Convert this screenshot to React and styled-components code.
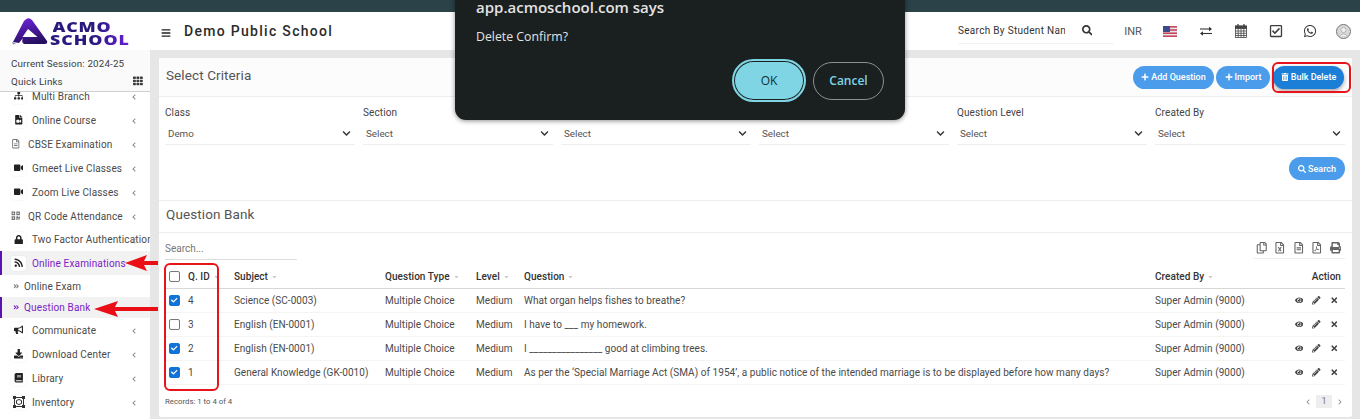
import React from 'react'
import styled, { createGlobalStyle } from 'styled-components'
import {
  FaBars, FaBook, FaBullhorn, FaCheck, FaChevronDown, FaChevronLeft, FaChevronRight, FaDownload,
  FaEye, FaFileVideo, FaLock, FaPencilAlt, FaPlus, FaPrint, FaQrcode,
  FaRegCheckSquare, FaRegCopy, FaRegFileAlt, FaRegFileExcel, FaRegFilePdf, FaRss, FaSearch, FaSitemap,
  FaTh, FaTimes, FaTrashAlt, FaVideo, FaWhatsapp, FaAngleDoubleRight, FaSortDown,
} from 'react-icons/fa'

const GlobalStyle = createGlobalStyle`
  html, body { margin: 0; padding: 0; height: 100%; overflow: hidden; }
  body { font-family: Roboto, "Liberation Sans", sans-serif; font-size: 10px; color: #444; background: #e6e6e6; }
`

const Page = styled.div`
  position: relative;
  width: 1360px;
  height: 419px;
  overflow: hidden;
  display: flex;
  flex-direction: column;
  background: #e6e6e6;
`

const TopStrip = styled.div`
  height: 12px;
  flex: none;
  background: #2a4248;
`

const Header = styled.header`
  height: 38px;
  flex: none;
  display: flex;
  align-items: center;
  background: #fff;
`

const LogoBox = styled.div`
  width: 150px;
  height: 38px;
  flex: none;
  display: flex;
  align-items: flex-start;
  padding: 5px 0 0 12px;
  box-sizing: border-box;
`

const LogoText = styled.div`
  margin: 4px 0 0 2px;
  font-family: "Open Sans", sans-serif;
  font-weight: 800;
  font-size: 14px;
  line-height: 12.5px;
  transform: scaleX(1.27);
  transform-origin: left top;
`

const LogoLine = styled.div`
  letter-spacing: ${p => p.$spacing}px;
  margin-left: ${p => p.$indent}px;
  background: linear-gradient(90deg, #2a1a80, #2a1a80 55%, #6a1fd8);
  -webkit-background-clip: text;
  background-clip: text;
  color: transparent;
`

const Burger = styled.span`
  width: 34px;
  padding-left: 11px;
  margin-top: 3px;
  box-sizing: border-box;
  flex: none;
  display: flex;
  color: #222;
  font-size: 10px;
`

const SchoolName = styled.h1`
  margin: 0;
  font-size: 14px;
  font-weight: 500;
  letter-spacing: 1.3px;
  color: #2b2b2b;
`

const HeaderTools = styled.div`
  margin-left: auto;
  display: flex;
  align-items: center;
`

const StudentSearch = styled.div`
  width: 156px;
  height: 26px;
  display: flex;
  align-items: center;
  justify-content: space-between;
  padding-right: 22px;
  box-sizing: border-box;
  border-bottom: 1px solid #f3f3f3;
  color: #333;
  font-size: 10px;
  letter-spacing: 0.3px;
  svg { font-size: 10.5px; }
`

const ClippedText = styled.span`
  width: 107px;
  overflow: hidden;
  white-space: nowrap;
`

const ToolCell = styled.div`
  width: ${p => p.$width || 35}px;
  display: flex;
  justify-content: center;
  align-items: center;
  color: #3c3c3c;
  font-size: ${p => p.$size || 13}px;
`

const Currency = styled.span`
  font-size: 11px;
  color: #555;
`

const Body = styled.div`
  flex: 1;
  min-height: 0;
  display: flex;
`

const Sidebar = styled.aside`
  width: 150px;
  flex: none;
  display: flex;
  flex-direction: column;
  background: #fff;
  overflow: hidden;
`

const SessionBox = styled.div`
  position: relative;
  z-index: 1;
  height: 42px;
  flex: none;
  box-sizing: border-box;
  padding: 4px 7px 0 11px;
  background: #fafafa;
  border-bottom: 1px solid #cfcfcf;
  font-size: 9.8px;
  letter-spacing: 0.15px;
`

const SessionLine = styled.div`
  height: 18px;
  line-height: 13px;
  display: flex;
  justify-content: space-between;
  align-items: center;
  color: #3d3d3d;
`

const Menu = styled.nav`
  margin-top: -8px;
  display: flex;
  flex-direction: column;
`

const MenuRow = styled.div`
  position: relative;
  height: ${p => p.$height || 24}px;
  flex: none;
  display: flex;
  align-items: center;
  box-sizing: border-box;
  white-space: nowrap;
  font-size: 10px;
  letter-spacing: 0.15px;
  color: ${p => (p.$active ? '#7a22c4' : '#4a4a4a')};
  background: ${p => (p.$active ? '#f2f2f2' : '#fff')};
  border-left: ${p => (p.$active ? '2px solid #5b12b0' : '0')};
  padding-left: ${p => (p.$active ? 9 : 11)}px;
`

const MenuIcon = styled.span`
  width: 15px;
  height: 15px;
  margin-right: 6px;
  flex: none;
  display: flex;
  align-items: center;
  justify-content: center;
  border-radius: 3px;
  background: #fff;
  box-shadow: 0 0 2px rgba(0, 0, 0, 0.08);
  color: #222;
  font-size: 9.5px;
`

const FlatIcon = styled.span`
  width: 17px;
  flex: none;
  display: flex;
  color: #777;
  font-size: 9.5px;
`

const MenuChevron = styled(FaChevronLeft)`
  position: absolute;
  left: 131px;
  top: 10px;
  font-size: 6px;
  color: #888;
`

const SubIcon = styled.span`
  width: 11px;
  flex: none;
  margin-left: 2px;
  display: flex;
  color: ${p => (p.$active ? '#7a22c4' : '#777')};
  font-size: 6.5px;
`

const Card = styled.main`
  width: 1193px;
  height: 359px;
  margin: 8px 8px 0 9px;
  flex: none;
  display: flex;
  flex-direction: column;
  background: #fff;
  border-radius: 2px;
`

const CardHead = styled.div`
  height: ${p => p.$height}px;
  flex: none;
  box-sizing: border-box;
  display: flex;
  align-items: center;
  justify-content: space-between;
  padding: 0 8px 0 7px;
  border-bottom: 1px solid #eee;
  background: ${p => (p.$tint ? '#fcfcfc' : '#fff')};
`

const CardTitle = styled.h2`
  margin: 0 0 5px;
  font-size: 13.5px;
  font-weight: 400;
  letter-spacing: 0.1px;
  color: #555;
`

const ButtonRow = styled.div`
  display: flex;
  gap: 2px;
`

const PillButton = styled.button`
  height: 23px;
  width: ${p => p.$width}px;
  padding: 0;
  border: 0;
  border-radius: 12px;
  display: inline-flex;
  align-items: center;
  justify-content: center;
  gap: 2px;
  font-family: inherit;
  font-size: 9px;
  font-weight: 500;
  color: #fff;
  white-space: nowrap;
  background: ${p => (p.$strong ? '#1b7fd8' : '#4b9cea')};
  box-shadow: ${p => (p.$strong ? '0 2px 4px rgba(0,0,0,.35)' : 'none')};
  margin-left: ${p => p.$gap || 0}px;
`

const FilterPanel = styled.section`
  height: 104px;
  flex: none;
  box-sizing: border-box;
  padding: 9px 0 0 6px;
  border-bottom: 1px solid #eee;
`

const FilterGrid = styled.div`
  display: grid;
  grid-template-columns: repeat(6, 198px);
`

const FilterField = styled.div`
  width: 190px;
`

const FilterLabel = styled.div`
  height: 14px;
  line-height: 14px;
  color: #444;
  font-size: 10px;
  letter-spacing: 0.1px;
`

const FilterSelect = styled.div`
  height: 21px;
  margin-top: 3px;
  padding: 0 4px 0 3px;
  display: flex;
  align-items: center;
  justify-content: space-between;
  border-bottom: 1px solid #eee;
  color: #555;
  font-size: 9.8px;
  svg { font-size: 9px; color: #333; }
`

const SearchRow = styled.div`
  display: flex;
  justify-content: flex-end;
  padding: 12px 7px 0 0;
`

const BankTools = styled.div`
  height: 31px;
  flex: none;
  display: flex;
  align-items: center;
  justify-content: space-between;
  padding: 0 7px 0 6px;
`

const TableSearch = styled.div`
  width: 132px;
  height: 20px;
  line-height: 18px;
  margin-top: 2px;
  box-sizing: border-box;
  border-bottom: 1px solid #ddd;
  color: #777;
  font-size: 10px;
`

const ExportIcons = styled.div`
  width: 92px;
  height: 20px;
  box-sizing: border-box;
  display: flex;
  justify-content: flex-end;
  align-items: center;
  gap: 7px;
  padding-right: 4px;
  border-bottom: 1px solid #eee;
  color: #666;
  font-size: 11.5px;
`

const Table = styled.table`
  width: 1180px;
  margin-left: 6px;
  flex: none;
  table-layout: fixed;
  border-collapse: collapse;
`

const HeadCell = styled.th`
  height: 24px;
  padding: 0;
  text-align: ${p => p.$align || 'left'};
  padding-right: ${p => (p.$align === 'right' ? 4 : 0)}px;
  font-size: 10px;
  font-weight: 500;
  color: #333;
  letter-spacing: 0.05px;
  border-bottom: 1px solid #d8d8d8;
  white-space: nowrap;
  svg { color: #ccc; font-size: 7px; margin-left: 3px; vertical-align: 1px; }
`

const Row = styled.tr`
  height: 24px;
  border-bottom: 1px solid #f4f4f4;
`

const Cell = styled.td`
  padding: 0;
  color: #4a4a4a;
  font-size: 10px;
  letter-spacing: 0.05px;
  white-space: nowrap;
`

const CheckBox = styled.span`
  width: 9px;
  height: 9px;
  margin-left: 4px;
  display: flex;
  align-items: center;
  justify-content: center;
  border: 1px solid ${p => (p.$on ? '#1272d6' : '#777')};
  border-radius: 2px;
  background: ${p => (p.$on ? '#1272d6' : '#fff')};
  color: #fff;
  font-size: 6.5px;
`

const Actions = styled.div`
  display: flex;
  justify-content: flex-end;
  align-items: center;
  gap: 9px;
  padding-right: 7px;
  color: #444;
  font-size: 8.5px;
`

const TableFoot = styled.div`
  height: 34px;
  margin-top: 1px;
  padding: 0 9px 0 6px;
  display: flex;
  align-items: center;
  justify-content: space-between;
  font-size: 7.8px;
  color: #555;
`

const Pager = styled.div`
  display: flex;
  align-items: center;
  gap: 5px;
  color: #999;
  font-size: 6px;
`

const PageNumber = styled.span`
  width: 16px;
  height: 13px;
  line-height: 13px;
  text-align: center;
  font-size: 9px;
  background: #eee;
  color: #777;
`

const Dialog = styled.div`
  position: absolute;
  z-index: 5;
  left: 455px;
  top: -20px;
  width: 450px;
  height: 140px;
  box-sizing: border-box;
  padding: 20px 21px 0;
  border-radius: 11px;
  background: #1a1f20;
  box-shadow: 0 1px 5px rgba(0,0,0,.45);
  font-family: "Open Sans", sans-serif;
  color: #e3e3e3;
`

const DialogTitle = styled.div`
  font-size: 15px;
  line-height: 15px;
  font-weight: 600;
`

const DialogText = styled.div`
  margin-top: 14px;
  font-size: 12.3px;
  line-height: 16px;
`

const DialogButtons = styled.div`
  margin-top: 14px;
  display: flex;
  justify-content: flex-end;
  align-items: center;
  gap: 7px;
`

const DialogOk = styled.button`
  width: 70px;
  height: 39px;
  box-sizing: border-box;
  border: 0;
  border-radius: 20px;
  margin: 2px;
  background: #7fd5e3;
  outline: 2px solid #7fd5e3;
  box-shadow: inset 0 0 0 1px #1a1f20, 0 0 0 1px #1a1f20;
  font-family: inherit;
  font-size: 12px;
  font-weight: 500;
  color: #123238;
`

const DialogCancel = styled.button`
  width: 71px;
  height: 38px;
  border: 1px solid #8b9192;
  border-radius: 19px;
  background: transparent;
  font-family: inherit;
  font-size: 12px;
  font-weight: 600;
  color: #80d5e6;
`

const Callout = styled.div`
  position: absolute;
  z-index: 4;
  left: ${p => p.$x}px;
  top: ${p => p.$y}px;
  width: ${p => p.$w}px;
  height: ${p => p.$h}px;
  box-sizing: border-box;
  border: 2px solid #e8141c;
  border-radius: 6px;
`

const ArrowMark = styled.svg`
  position: absolute;
  z-index: 4;
  left: ${p => p.$x}px;
  top: ${p => p.$y}px;
`

function InventoryIcon() {
  return (
    <svg width="12" height="12" viewBox="0 0 12 12" fill="none" stroke="#333" strokeWidth="1">
      <rect x="1.5" y="1.5" width="9" height="9" />
      <path d="M3.5 4.5 L6 3.5 L8.5 4.5 V7.5 L6 8.5 L3.5 7.5 Z" />
      <path fill="#333" stroke="none" d="M0 0 H3 V3 H0 Z M9 0 H12 V3 H9 Z M0 9 H3 V12 H0 Z M9 9 H12 V12 H9 Z" />
    </svg>
  )
}

const menuTop = [
  { label: 'Multi Branch', icon: <FaSitemap /> },
  { label: 'Online Course', icon: <FaFileVideo /> },
  { label: 'CBSE Examination', icon: <FaRegFileAlt />, flat: true },
  { label: 'Gmeet Live Classes', icon: <FaVideo /> },
  { label: 'Zoom Live Classes', icon: <FaVideo /> },
  { label: 'QR Code Attendance', icon: <FaQrcode />, flat: true },
  { label: 'Two Factor Authentication', icon: <FaLock />, height: 23 },
]

const menuBottom = [
  { label: 'Communicate', icon: <FaBullhorn /> },
  { label: 'Download Center', icon: <FaDownload /> },
  { label: 'Library', icon: <FaBook /> },
  { label: 'Inventory', icon: <InventoryIcon /> },
]

const filters = [
  { label: 'Class', value: 'Demo' },
  { label: 'Section', value: 'Select' },
  { label: 'Subject', value: 'Select' },
  { label: 'Question Type', value: 'Select' },
  { label: 'Question Level', value: 'Select' },
  { label: 'Created By', value: 'Select' },
]

const questions = [
  { id: 4, on: true, subject: 'Science (SC-0003)', text: 'What organ helps fishes to breathe?' },
  { id: 3, on: false, subject: 'English (EN-0001)', text: 'I have to ___  my homework.' },
  { id: 2, on: true, subject: 'English (EN-0001)', text: 'I ________________ good at climbing trees.' },
  { id: 1, on: true, subject: 'General Knowledge (GK-0010)', text: 'As per the ‘Special Marriage Act (SMA) of 1954’, a public notice of the intended marriage is to be displayed before how many days?' },
]

const columns = [23, 46, 151, 91, 48, 631, 130, 60]

function MenuItem({ item, active }) {
  return (
    <MenuRow $active={active} $height={item.height}>
      {item.flat ? <FlatIcon>{item.icon}</FlatIcon> : <MenuIcon>{item.icon}</MenuIcon>}
      {item.label}
      <MenuChevron />
    </MenuRow>
  )
}

function Logo() {
  return (
    <LogoBox>
      <svg width="36" height="28" viewBox="0 0 36 28">
        <defs>
          <linearGradient id="logoFill" x1="0.3" y1="0" x2="0.6" y2="1">
            <stop offset="0" stopColor="#6d22d6" />
            <stop offset="1" stopColor="#24105e" />
          </linearGradient>
        </defs>
        <path
          fill="url(#logoFill)"
          fillRule="evenodd"
          d="M1 25 L12 4 Q16 -1 20 3 L35 24 Q36 27 33 27 L12 27 Q9 25 11 21 L7 26 Z M16 12 L10.5 20 L25.5 20 Z"
        />
        <path fill="#8a8a9a" d="M0 25 L4 26.5 L1 27.5 Z" />
      </svg>
      <LogoText>
        <LogoLine $spacing={0.6} $indent={2}>ACMO</LogoLine>
        <LogoLine $spacing={0.75} $indent={0}>SCHOOL</LogoLine>
      </LogoText>
    </LogoBox>
  )
}

function Flag() {
  return (
    <svg width="14" height="11" viewBox="0 0 14 11">
      <rect width="14" height="11" fill="#e6e6ee" />
      <rect y="0" width="14" height="1.6" fill="#c8485a" />
      <rect y="3.2" width="14" height="1.6" fill="#c8485a" />
      <rect y="6.4" width="14" height="1.6" fill="#c8485a" />
      <rect y="9.4" width="14" height="1.6" fill="#c8485a" />
      <rect width="7" height="6" fill="#3d4a8c" />
    </svg>
  )
}

function ExchangeIcon() {
  return (
    <svg width="12" height="10" viewBox="0 0 12 10" fill="none" stroke="#333" strokeWidth="1.1">
      <path d="M0 3 H11" />
      <path fill="#333" stroke="none" d="M9 0.8 L12 3 L9 5.2 Z" />
      <path d="M1 7.5 H12" />
      <path fill="#333" stroke="none" d="M3 5.3 L0 7.5 L3 9.7 Z" />
    </svg>
  )
}

function CalendarIcon() {
  return (
    <svg width="12" height="14" viewBox="0 0 12 14" fill="none" stroke="#444" strokeWidth="0.8">
      <rect x="0.5" y="2" width="11" height="11.5" />
      <rect x="0.5" y="2" width="11" height="2.6" fill="#444" />
      <path d="M0.5 7 H11.5 M0.5 9.3 H11.5 M0.5 11.5 H11.5 M3.2 4.6 V13.5 M6 4.6 V13.5 M8.8 4.6 V13.5" />
      <path strokeWidth="1.3" d="M3 0 V2.5 M9 0 V2.5" />
    </svg>
  )
}

function Avatar() {
  return (
    <svg width="15" height="15" viewBox="0 0 15 15">
      <circle cx="7.5" cy="7.5" r="7" fill="#d8d8d8" stroke="#777" />
      <circle cx="7.5" cy="6" r="2.6" fill="#efefef" stroke="#999" strokeWidth=".6" />
      <path d="M3.5 12 Q7.5 8 11.5 12" fill="#efefef" stroke="#999" strokeWidth=".6" />
    </svg>
  )
}

function Arrow({ x, y, length, head }) {
  return (
    <ArrowMark $x={x} $y={y} width={length} height="18" viewBox={`0 0 ${length} 18`}>
      <path fill="#ea0f16" d={`M0 9 L${head} 1 L${head - 3} 7 L${length} 7 L${length} 11 L${head - 3} 11 L${head} 17 Z`} />
    </ArrowMark>
  )
}

export default function App() {
  return (
    <Page>
      <GlobalStyle />
      <TopStrip />
      <Header>
        <Logo />
        <Burger><FaBars /></Burger>
        <SchoolName>Demo Public School</SchoolName>
        <HeaderTools>
          <StudentSearch>
            <ClippedText>Search By Student Name</ClippedText>
            <FaSearch />
          </StudentSearch>
          <ToolCell $width={38}><Currency>INR</Currency></ToolCell>
          <ToolCell $width={36}><Flag /></ToolCell>
          <ToolCell $width={36}><ExchangeIcon /></ToolCell>
          <ToolCell $width={34}><CalendarIcon /></ToolCell>
          <ToolCell $size={14}><FaRegCheckSquare /></ToolCell>
          <ToolCell $width={34} $size={14}><FaWhatsapp /></ToolCell>
          <ToolCell $width={33}><Avatar /></ToolCell>
        </HeaderTools>
      </Header>

      <Body>
        <Sidebar>
          <SessionBox>
            <SessionLine>Current Session: 2024-25</SessionLine>
            <SessionLine>Quick Links <FaTh /></SessionLine>
          </SessionBox>
          <Menu>
            {menuTop.map(item => <MenuItem key={item.label} item={item} />)}
            <MenuItem item={{ label: 'Online Examinations', icon: <FaRss /> }} active />
            <MenuRow $height={22}>
              <SubIcon><FaAngleDoubleRight /></SubIcon>Online Exam
            </MenuRow>
            <MenuRow $height={21} $active>
              <SubIcon $active><FaAngleDoubleRight /></SubIcon>Question Bank
            </MenuRow>
            {menuBottom.map(item => <MenuItem key={item.label} item={item} />)}
          </Menu>
        </Sidebar>

        <Card>
          <CardHead $height={39} $tint>
            <CardTitle>Select Criteria</CardTitle>
            <ButtonRow>
              <PillButton $width={81}><FaPlus size={8} />Add Question</PillButton>
              <PillButton $width={54}><FaPlus size={8} />Import</PillButton>
              <PillButton $width={71} $strong $gap={1}><FaTrashAlt size={8} />Bulk Delete</PillButton>
            </ButtonRow>
          </CardHead>

          <FilterPanel>
            <FilterGrid>
              {filters.map(filter => (
                <FilterField key={filter.label}>
                  <FilterLabel>{filter.label}</FilterLabel>
                  <FilterSelect>{filter.value}<FaChevronDown /></FilterSelect>
                </FilterField>
              ))}
            </FilterGrid>
            <SearchRow>
              <PillButton $width={56}><FaSearch size={8} />Search</PillButton>
            </SearchRow>
          </FilterPanel>

          <CardHead $height={32}>
            <CardTitle>Question Bank</CardTitle>
          </CardHead>

          <BankTools>
            <TableSearch>Search...</TableSearch>
            <ExportIcons>
              <FaRegCopy /><FaRegFileExcel /><FaRegFileAlt /><FaRegFilePdf /><FaPrint />
            </ExportIcons>
          </BankTools>

          <Table>
            <colgroup>
              {columns.map((width, i) => <col key={i} width={width} />)}
            </colgroup>
            <thead>
              <tr>
                <HeadCell><CheckBox /></HeadCell>
                <HeadCell>Q. ID<FaSortDown /></HeadCell>
                <HeadCell>Subject<FaSortDown /></HeadCell>
                <HeadCell>Question Type<FaSortDown /></HeadCell>
                <HeadCell>Level<FaSortDown /></HeadCell>
                <HeadCell>Question<FaSortDown /></HeadCell>
                <HeadCell>Created By<FaSortDown /></HeadCell>
                <HeadCell $align="right">Action</HeadCell>
              </tr>
            </thead>
            <tbody>
              {questions.map(q => (
                <Row key={q.id}>
                  <Cell><CheckBox $on={q.on}>{q.on && <FaCheck />}</CheckBox></Cell>
                  <Cell>{q.id}</Cell>
                  <Cell>{q.subject}</Cell>
                  <Cell>Multiple Choice</Cell>
                  <Cell>Medium</Cell>
                  <Cell>{q.text}</Cell>
                  <Cell>Super Admin (9000)</Cell>
                  <Cell>
                    <Actions><FaEye /><FaPencilAlt /><FaTimes /></Actions>
                  </Cell>
                </Row>
              ))}
            </tbody>
          </Table>

          <TableFoot>
            <span>Records: 1 to 4 of 4</span>
            <Pager><FaChevronLeft /><PageNumber>1</PageNumber><FaChevronRight /></Pager>
          </TableFoot>
        </Card>
      </Body>

      <Dialog>
        <DialogTitle>app.acmoschool.com says</DialogTitle>
        <DialogText>Delete Confirm?</DialogText>
        <DialogButtons>
          <DialogOk>OK</DialogOk>
          <DialogCancel>Cancel</DialogCancel>
        </DialogButtons>
      </Dialog>

      <Callout $x={1272} $y={62} $w={79} $h={31} />
      <Callout $x={164} $y={263} $w={55} $h={128} />
      <Arrow x={125} y={254} length={33} head={22} />
      <Arrow x={94} y={300} length={64} head={24} />
    </Page>
  )
}
